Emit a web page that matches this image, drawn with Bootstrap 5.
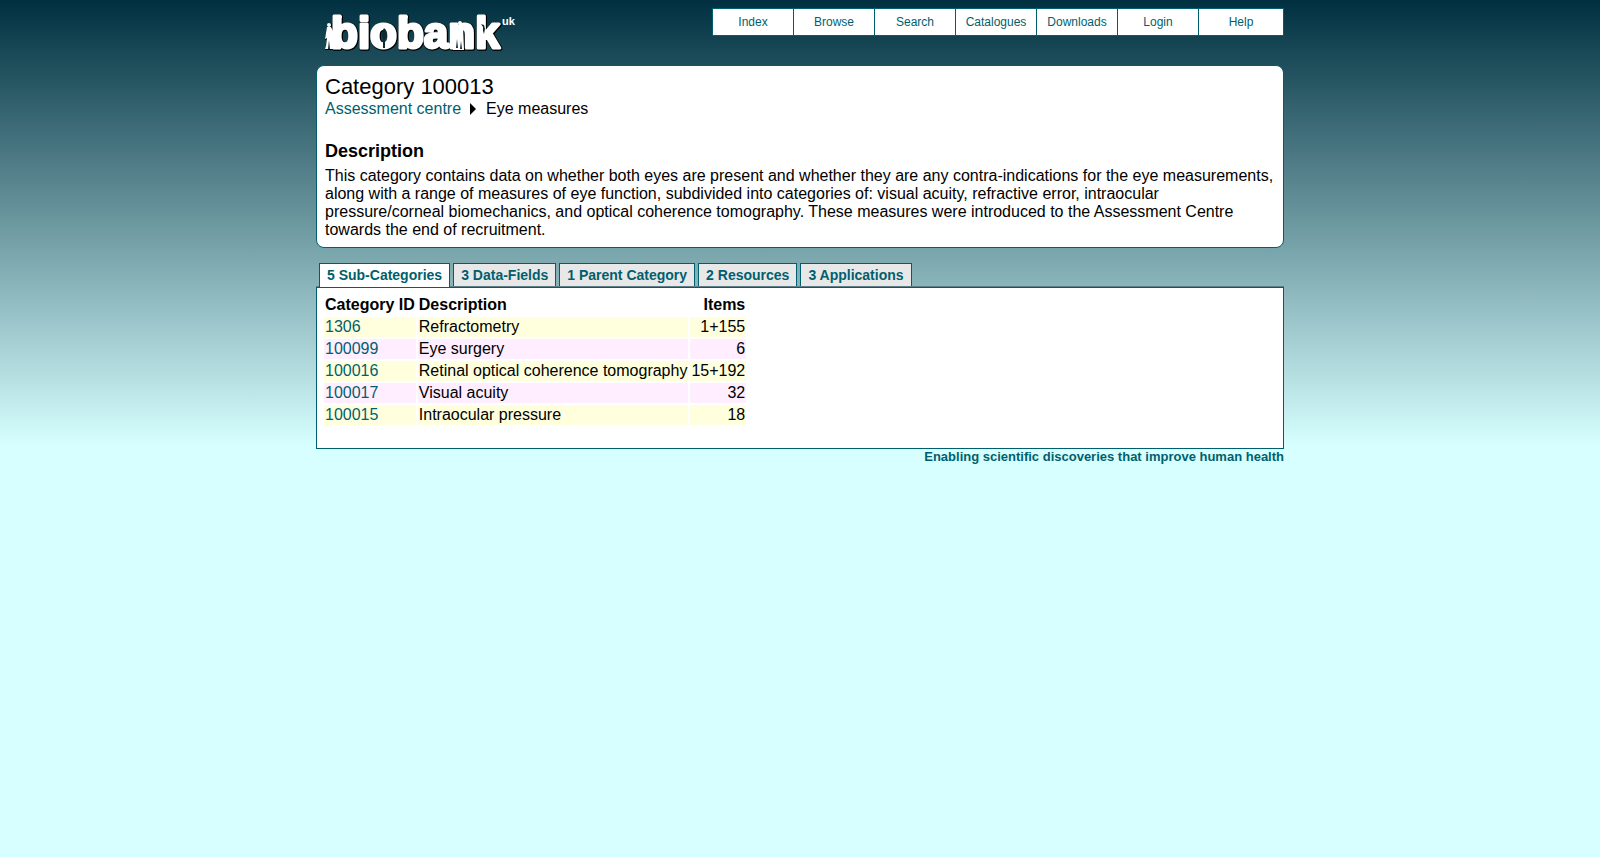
<!DOCTYPE html>
<html lang="en">
<head>
<meta charset="utf-8">
<meta name="viewport" content="width=device-width, initial-scale=1">
<title>Category 100013</title>
<link rel="stylesheet" href="https://cdn.jsdelivr.net/npm/bootstrap@5.3.0/dist/css/bootstrap.min.css">
<style>
  :root { --teal: #005f6e; }
  body {
    font: 16px/18px "Liberation Sans", Arial, sans-serif;
    color: #000;
    background: #d7ffff linear-gradient(#003040 0, #d7ffff 446px) no-repeat;
  }
  a { color: var(--teal); text-decoration: none; }
  a:hover { text-decoration: underline; }
  .page-shell { max-width: 968px; }
  .logo-word { filter: drop-shadow(1px 0 0 #000) drop-shadow(0 1px 0 #000); }
  .site-menu { background: #fff; border: 1px solid var(--teal); font-size: 12px; }
  .site-menu a { width: 81px; line-height: 26px; border-right: 1px solid var(--teal); text-align: center; }
  .site-menu li:last-child a { width: 84px; border-right: 0; }
  .info-box { background: #fff; border: 1px solid var(--teal); border-radius: 8px; padding: 8px; margin-bottom: 15px; }
  h1 { font-size: 22px; line-height: 25px; font-weight: 400; margin-bottom: 1px; }
  h2 { font-size: 18px; line-height: 18px; font-weight: 700; margin-bottom: 7px; }
  .tab-row { gap: 3px; padding-left: 3px; border-bottom: 1px solid #5f7f88; }
  .tab-row .nav-link { font-size: 14px; line-height: 16px; font-weight: 700; color: var(--teal); background: #e8e8e8; border: 1px solid var(--teal); border-bottom: 0; border-radius: 0; padding: 3px 7px; }
  .tab-row .nav-link.active { background: #fff; margin-bottom: -1px; padding-bottom: 4px; z-index: 1; }
  .tab-panel { background: #fff; border: 1px solid var(--teal); padding: 5px 5px 21px; }
  .item-table { border-collapse: separate; border-spacing: 2px; }
  .item-table th, .item-table td { padding: 1px; }
  .item-table tbody tr:nth-child(odd) td { background: #ffffdd; }
  .item-table tbody tr:nth-child(even) td { background: #ffeeff; }
  .tagline { font-size: 13px; line-height: 16px; font-weight: 700; color: var(--teal); }
</style>
</head>
<body>
<div class="page-shell mx-auto">
  <header class="d-flex justify-content-between align-items-start pt-2">
    <a href="#" class="ps-2" aria-label="UK Biobank">
      <svg class="d-block" width="192" height="57" viewBox="324 8 192 57">
        <g font-family="Liberation Sans, Arial, sans-serif" font-weight="700" fill="#fff">
          <g class="logo-word">
            <text x="331" y="48" font-size="44" stroke="#fff" stroke-width="3" stroke-linejoin="round">biobank</text>
            <!-- rounded tops of the tall stems -->
            <ellipse cx="338" cy="17" rx="4" ry="2"/><ellipse cx="404" cy="17" rx="4" ry="2"/><ellipse cx="481" cy="17" rx="4" ry="2"/>
            <!-- standing figures -->
            <circle cx="329" cy="25" r="2"/>
            <path d="M327 27h4l2 4v18h-8l1-3 1-8-2 1z"/>
            <circle cx="454" cy="25" r="2"/><circle cx="460" cy="23" r="2"/>
            <path d="M452 27h4l3-2h4l1 25h-11l1-10-2-2z"/>
          </g>
          <g fill="#102a33">
            <path d="M384 28l2 2 1 6-2 4v8h-2v-8l-1-4 1-6z"/>
            <path d="M328 49l1-9 1 9zM456 48l1-9 1 9zM460 49l1-8 1 8z"/>
            <path d="M481 24l3 1 1 4-1 5-1-3v-4z"/>
          </g>
          <text x="502" y="25" font-size="11">uk</text>
        </g>
      </svg>
    </a>
    <nav aria-label="Main">
      <ul class="site-menu list-unstyled d-flex mb-0">
        <li><a class="d-block" href="#">Index</a></li>
        <li><a class="d-block" href="#">Browse</a></li>
        <li><a class="d-block" href="#">Search</a></li>
        <li><a class="d-block" href="#">Catalogues</a></li>
        <li><a class="d-block" href="#">Downloads</a></li>
        <li><a class="d-block" href="#">Login</a></li>
        <li><a class="d-block" href="#">Help</a></li>
      </ul>
    </nav>
  </header>
  <main>
    <section class="info-box">
      <h1>Category 100013</h1>
      <div class="d-flex align-items-center mb-4"><a href="#">Assessment centre</a><svg class="ms-2 me-2" width="9" height="12" viewBox="0 0 9 12" aria-hidden="true"><path d="M1 0 7 6 1 12Z"/></svg><span>Eye measures</span></div>
      <h2>Description</h2>
      <p class="mb-0">This category contains data on whether both eyes are present and whether they are any contra-indications for the eye measurements, along with a range of measures of eye function, subdivided into categories of: visual acuity, refractive error, intraocular pressure/corneal biomechanics, and optical coherence tomography. These measures were introduced to the Assessment Centre towards the end of recruitment.</p>
    </section>
    <div class="tab-row nav" role="tablist">
      <button class="nav-link position-relative active" type="button" role="tab" aria-selected="true">5 Sub-Categories</button>
      <button class="nav-link" type="button" role="tab">3 Data-Fields</button>
      <button class="nav-link" type="button" role="tab">1 Parent Category</button>
      <button class="nav-link" type="button" role="tab">2 Resources</button>
      <button class="nav-link" type="button" role="tab">3 Applications</button>
    </div>
    <section class="tab-panel">
      <table class="item-table">
        <thead><tr><th>Category ID</th><th>Description</th><th class="text-end">Items</th></tr></thead>
        <tbody>
          <tr><td><a href="#">1306</a></td><td>Refractometry</td><td class="text-end">1+155</td></tr>
          <tr><td><a href="#">100099</a></td><td>Eye surgery</td><td class="text-end">6</td></tr>
          <tr><td><a href="#">100016</a></td><td>Retinal optical coherence tomography</td><td class="text-end">15+192</td></tr>
          <tr><td><a href="#">100017</a></td><td>Visual acuity</td><td class="text-end">32</td></tr>
          <tr><td><a href="#">100015</a></td><td>Intraocular pressure</td><td class="text-end">18</td></tr>
        </tbody>
      </table>
    </section>
  </main>
  <footer class="tagline text-end">Enabling scientific discoveries that improve human health</footer>
</div>
<script src="https://cdn.jsdelivr.net/npm/bootstrap@5.3.0/dist/js/bootstrap.bundle.min.js"></script>
</body>
</html>
